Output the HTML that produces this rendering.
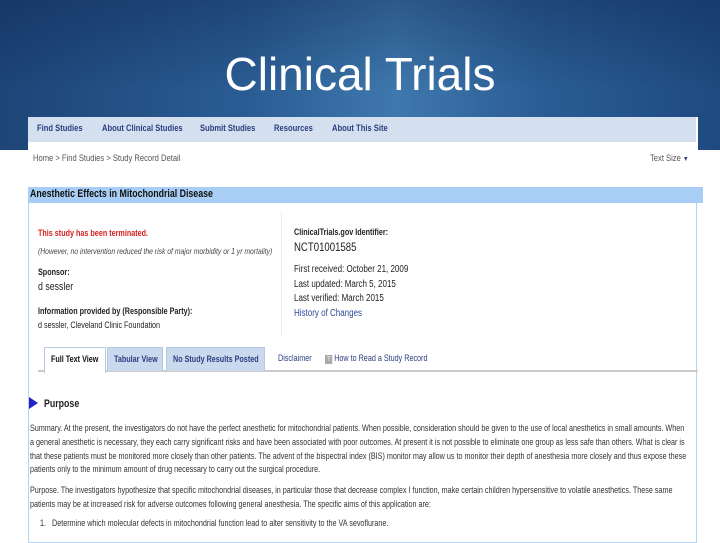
<!DOCTYPE html>
<html><head><style>
*{margin:0;padding:0;box-sizing:border-box}
body{width:720px;height:540px;overflow:hidden;background:#fff;position:relative;font-family:"Liberation Sans",sans-serif}
.bg{position:absolute;left:0;top:0;width:720px;height:150px;background:linear-gradient(90deg,#1d4578 0%,#2a5d94 35%,#3f78ad 55%,#2a5d94 75%,#1e4a80 100%)}
.bg2{position:absolute;left:0;top:0;width:720px;height:150px;background:linear-gradient(180deg,rgba(10,30,70,.35),rgba(0,0,0,0) 60%)}
h1{position:absolute;left:0;width:720px;top:47px;text-align:center;color:#fff;font-weight:normal;font-size:46px}
.shot{position:absolute;left:28px;top:117px;width:670px;height:423px;background:#fff;font-size:9px;color:#222}
.nav{position:absolute;left:0;top:0;width:668px;height:25px;background:#d4e0ef}
.a,.nav span{position:absolute;white-space:nowrap;transform:scaleX(.8);transform-origin:left top}
.nav span{top:6px;font-weight:bold;color:#2b3e80;font-size:9.5px}
.tb{position:absolute;left:0;top:70px;width:675px;height:16px;background:#a8cef5}
.box{position:absolute;left:0;top:86px;width:669px;height:340px;border:1px solid #b9d3ee;border-top:none}
.tab{position:absolute;top:230px;height:24px;font-weight:bold;color:#2b3e80;background:#c9d9ee;border:1px solid #b8c9df;border-bottom:none}
.tab span{position:absolute;left:6px;top:6px;white-space:nowrap;transform:scaleX(.8);transform-origin:left top}
p.t{position:absolute;left:2px;width:822px;font-size:9px;line-height:13.8px;color:#333;transform:scaleX(.8);transform-origin:left top}
</style></head><body>
<div class="bg"></div><div class="bg2"></div>
<h1>Clinical Trials</h1>
<div class="shot">
<div class="nav">
<span style="left:9px">Find Studies</span>
<span style="left:74px">About Clinical Studies</span>
<span style="left:172px">Submit Studies</span>
<span style="left:246px">Resources</span>
<span style="left:304px">About This Site</span>
</div>
<div class="a" style="left:5px;top:36px;color:#555;font-size:9.5px">Home &gt; Find Studies &gt; Study Record Detail</div>
<div class="a" style="left:622px;top:36px;color:#555;font-size:9.5px">Text Size <span style="color:#2b3e80;font-size:7px">▼</span></div>
<div class="tb"></div>
<div class="a" style="left:2px;top:71px;font-weight:bold;font-size:11px;color:#111">Anesthetic Effects in Mitochondrial Disease</div>
<div class="box"></div>
<div class="a" style="left:253px;top:95px;width:1px;height:124px;background:#e2e8f0"></div>
<div class="a" style="left:10px;top:111px;color:#d42020;font-weight:bold">This study has been terminated.</div>
<div class="a" style="left:10px;top:129px;font-style:italic;font-size:8.5px;color:#444">(However, no intervention reduced the risk of major morbidity or 1 yr mortality)</div>
<div class="a" style="left:10px;top:150px;font-weight:bold;font-size:9px">Sponsor:</div>
<div class="a" style="left:10px;top:164px;font-size:11px">d sessler</div>
<div class="a" style="left:10px;top:189px;font-weight:bold;font-size:9px">Information provided by (Responsible Party):</div>
<div class="a" style="left:10px;top:203px;font-size:9px">d sessler, Cleveland Clinic Foundation</div>
<div class="a" style="left:266px;top:110px;font-weight:bold;font-size:9px">ClinicalTrials.gov Identifier:</div>
<div class="a" style="left:266px;top:123px;font-size:12px">NCT01001585</div>
<div class="a" style="left:266px;top:146px;line-height:14.5px;font-size:10px">First received: October 21, 2009<br>Last updated: March 5, 2015<br>Last verified: March 2015<br><span style="color:#2b4a9a">History of Changes</span></div>
<div class="a" style="left:10px;top:253px;width:825px;height:2px;background:#ccc"></div>
<div class="tab" style="left:16px;width:62px;background:#fff;color:#111;height:26px"><span>Full Text View</span></div>
<div class="tab" style="left:79px;width:56px"><span>Tabular View</span></div>
<div class="tab" style="left:138px;width:99px"><span>No Study Results Posted</span></div>
<div class="a" style="left:250px;top:236px;color:#2b3e80">Disclaimer</div>
<div class="a" style="left:297px;top:236px;color:#2b3e80"><span style="display:inline-block;width:9px;height:9px;background:#aaa;color:#fff;font-size:7px;text-align:center;line-height:9px">?</span> How to Read a Study Record</div>
<div style="position:absolute;left:1px;top:280px;width:0;height:0;border-left:9px solid #2222cc;border-top:6px solid transparent;border-bottom:6px solid transparent"></div>
<div class="a" style="left:16px;top:281px;font-weight:bold;font-size:11px">Purpose</div>
<p class="t" style="top:305px">Summary. At the present, the investigators do not have the perfect anesthetic for mitochondrial patients. When possible, consideration should be given to the use of local anesthetics in small amounts. When a general anesthetic is necessary, they each carry significant risks and have been associated with poor outcomes. At present it is not possible to eliminate one group as less safe than others. What is clear is that these patients must be monitored more closely than other patients. The advent of the bispectral index (BIS) monitor may allow us to monitor their depth of anesthesia more closely and thus expose these patients only to the minimum amount of drug necessary to carry out the surgical procedure.</p>
<p class="t" style="top:367px">Purpose. The investigators hypothesize that specific mitochondrial diseases, in particular those that decrease complex I function, make certain children hypersensitive to volatile anesthetics. These same patients may be at increased risk for adverse outcomes following general anesthesia. The specific aims of this application are:</p>
<p class="t" style="top:400px;left:12px">1.&nbsp;&nbsp; Determine which molecular defects in mitochondrial function lead to alter sensitivity to the VA sevoflurane.</p>
</div>
</body></html>
